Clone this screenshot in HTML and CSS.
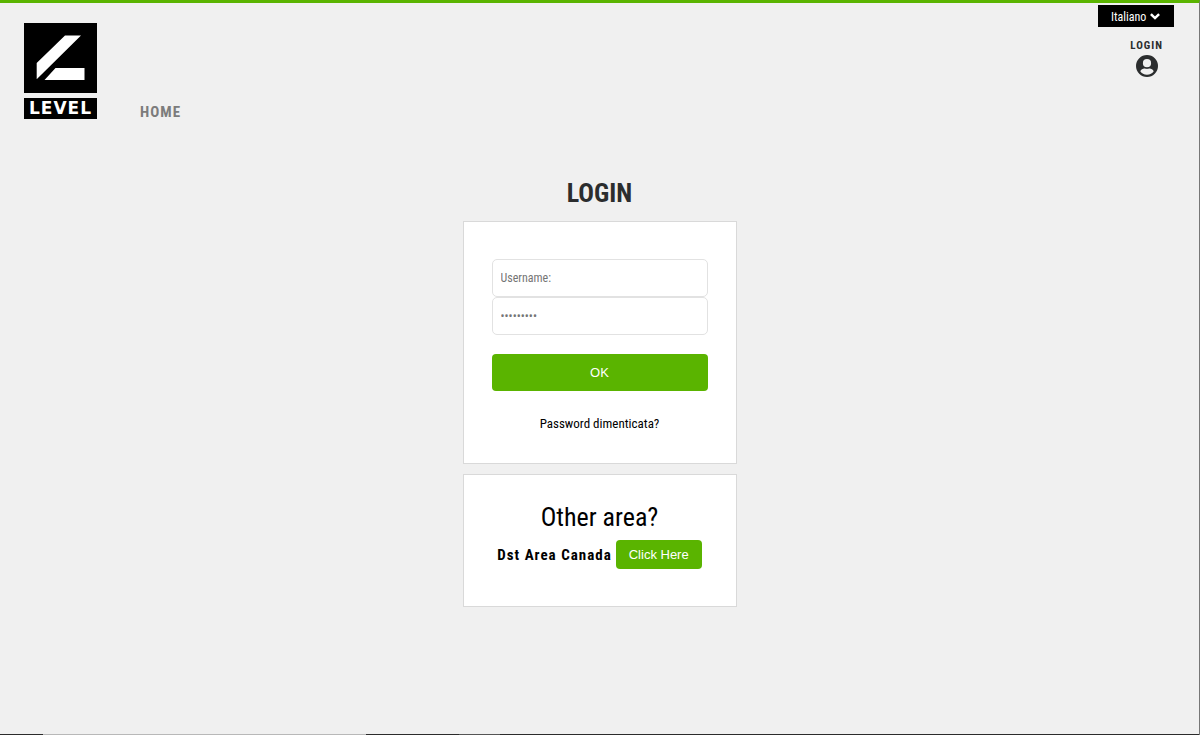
FILE: index.html
```html
<!DOCTYPE html>
<html lang="it">
<head>
<meta charset="utf-8">
<meta name="viewport" content="width=device-width, initial-scale=1">
<title>Level - Login</title>
<link rel="stylesheet" href="styles.css">
</head>
<body>
<header class="header">
  <a class="logo" href="#" aria-label="Level">
    <svg class="logo-mark" viewBox="0 0 73 70" aria-hidden="true">
      <rect width="73" height="70" fill="#000"/>
      <path d="M41 12.5H57L12.7 56.3V40ZM31.5 45H60.5V57H20.5Z" fill="#fff"/>
    </svg>
    <span class="logo-word">LEVEL</span>
  </a>
  <nav class="nav"><a class="nav-link" href="#">HOME</a></nav>
  <div class="tools">
    <div class="language">
      <select class="language-select" aria-label="Lingua">
        <option>Italiano</option>
        <option>English</option>
      </select>
      <svg class="language-arrow" viewBox="0 0 10 7" aria-hidden="true"><path d="M.9 1.1 5 5.1 9.1 1.1" fill="none" stroke="#fff" stroke-width="2.5"/></svg>
    </div>
    <a class="account" href="#">
      <span>LOGIN</span>
      <svg class="account-icon" viewBox="0 0 22 22" aria-hidden="true">
        <path fill="#2b2d2e" fill-rule="evenodd" d="M11 0a11 11 0 1 1 0 22a11 11 0 0 1 0-22ZM11 4.1a4.1 4.1 0 1 0 0 8.2a4.1 4.1 0 0 0 0-8.2ZM4.3 16.2C5.6 18.4 8.1 19.7 11 19.7S16.4 18.4 17.7 16.2C16.9 14.5 15.2 13.5 13.6 13.5C12.7 13.5 12.3 13.9 11 13.9S9.3 13.5 8.4 13.5C6.8 13.5 5.1 14.5 4.3 16.2Z"/>
      </svg>
    </a>
  </div>
</header>
<main class="main">
  <h1 class="title">LOGIN</h1>
  <form class="card login">
    <input class="field" type="text" placeholder="Username:" aria-label="Username">
    <input class="field" type="password" placeholder="•••••••••" aria-label="Password">
    <button class="button submit" type="button">OK</button>
    <a class="forgot" href="#">Password dimenticata?</a>
  </form>
  <section class="card other">
    <h2 class="other-title">Other area?</h2>
    <div class="other-row">
      <strong class="area">Dst Area Canada</strong>
      <button class="button" type="button">Click Here</button>
    </div>
  </section>
</main>
<div class="edge"></div>
</body>
</html>
```
FILE: styles.css
```css
* { box-sizing: border-box; }
body {
  margin: 0;
  min-height: 100vh;
  display: flex;
  flex-direction: column;
  background: #f0f0f0;
  border-top: 3px solid #5ab400;
  border-right: 1px solid #777;
  font-family: "Roboto Condensed", "Liberation Sans Narrow", Roboto, sans-serif;
  color: #000;
}
a { color: inherit; text-decoration: none; }
.header { display: flex; align-items: flex-start; padding-left: 24px; }
.logo { display: flex; flex-direction: column; gap: 5px; width: 73px; margin-top: 20px; }
.logo-mark { display: block; width: 73px; height: 70px; }
.logo-word {
  background: #000;
  color: #fff;
  height: 21px;
  line-height: 21px;
  text-align: center;
  font-family: "DejaVu Sans", sans-serif;
  font-size: 17px;
  font-weight: bold;
  letter-spacing: 1px;
}
.nav { margin: 99px 0 0 43px; }
.nav-link { font-size: 15px; line-height: 20px; font-weight: bold; letter-spacing: 1px; color: #7c7c7c; }
.tools { margin: 2px 25px 0 auto; display: flex; flex-direction: column; align-items: flex-end; }
.language { position: relative; }
.language-select {
  display: block;
  appearance: none;
  width: 76px;
  height: 22px;
  padding: 2px 0 0 13px;
  border: 0;
  border-radius: 0;
  background: #000;
  color: #fff;
  font-family: inherit;
  font-size: 12px;
}
.language-arrow { position: absolute; right: 14px; top: 8px; width: 10px; height: 7px; pointer-events: none; }
.account {
  margin: 11px 11px 0 0;
  display: flex;
  flex-direction: column;
  align-items: center;
  gap: 2px;
  color: #2b2d2e;
  font-size: 11px;
  line-height: 15px;
  font-weight: bold;
  letter-spacing: 1px;
}
.account-icon { display: block; width: 22px; height: 22px; }
.main { flex: 1; display: flex; flex-direction: column; align-items: center; padding: 54px 0 24px; }
.title { margin: 0 0 11px; color: #2b2d2e; font-size: 26px; line-height: 34px; font-weight: bold; }
.card {
  width: 274px;
  max-width: 100%;
  background: #fff;
  border: 1px solid #d9d9d9;
  display: flex;
  flex-direction: column;
}
.login { padding: 37px 28px 29px; }
.field {
  width: 100%;
  height: 38px;
  padding: 0 8px;
  border: 1px solid #e2e2e2;
  border-radius: 5px;
  background: #fff;
  font-family: inherit;
  font-size: 12px;
}
.field::placeholder { color: #757575; opacity: 1; }
.button {
  border: 0;
  border-radius: 4px;
  background: #5ab400;
  color: #fff;
  padding: 7px 13px;
  font-family: "Liberation Sans", Arial, sans-serif;
  font-size: 13px;
  line-height: 15px;
}
.submit { margin: 19px 0 23px; height: 37px; }
.forgot { text-align: center; font-size: 13px; line-height: 20px; }
.other { margin-top: 10px; padding: 25px 28px 37px; align-items: center; }
.other-title { margin: 0 0 6px; font-size: 26px; line-height: 34px; font-weight: normal; }
.other-row { display: flex; align-items: center; gap: 4px; white-space: nowrap; }
.area { font-size: 15px; letter-spacing: 1px; }
.edge {
  height: 1px;
  background: linear-gradient(to right, #2b2b2b 43px, #b8b8b8 43px 366px, #2b2b2b 366px 459px, #555 459px 500px, #2b2b2b 500px);
}
```
